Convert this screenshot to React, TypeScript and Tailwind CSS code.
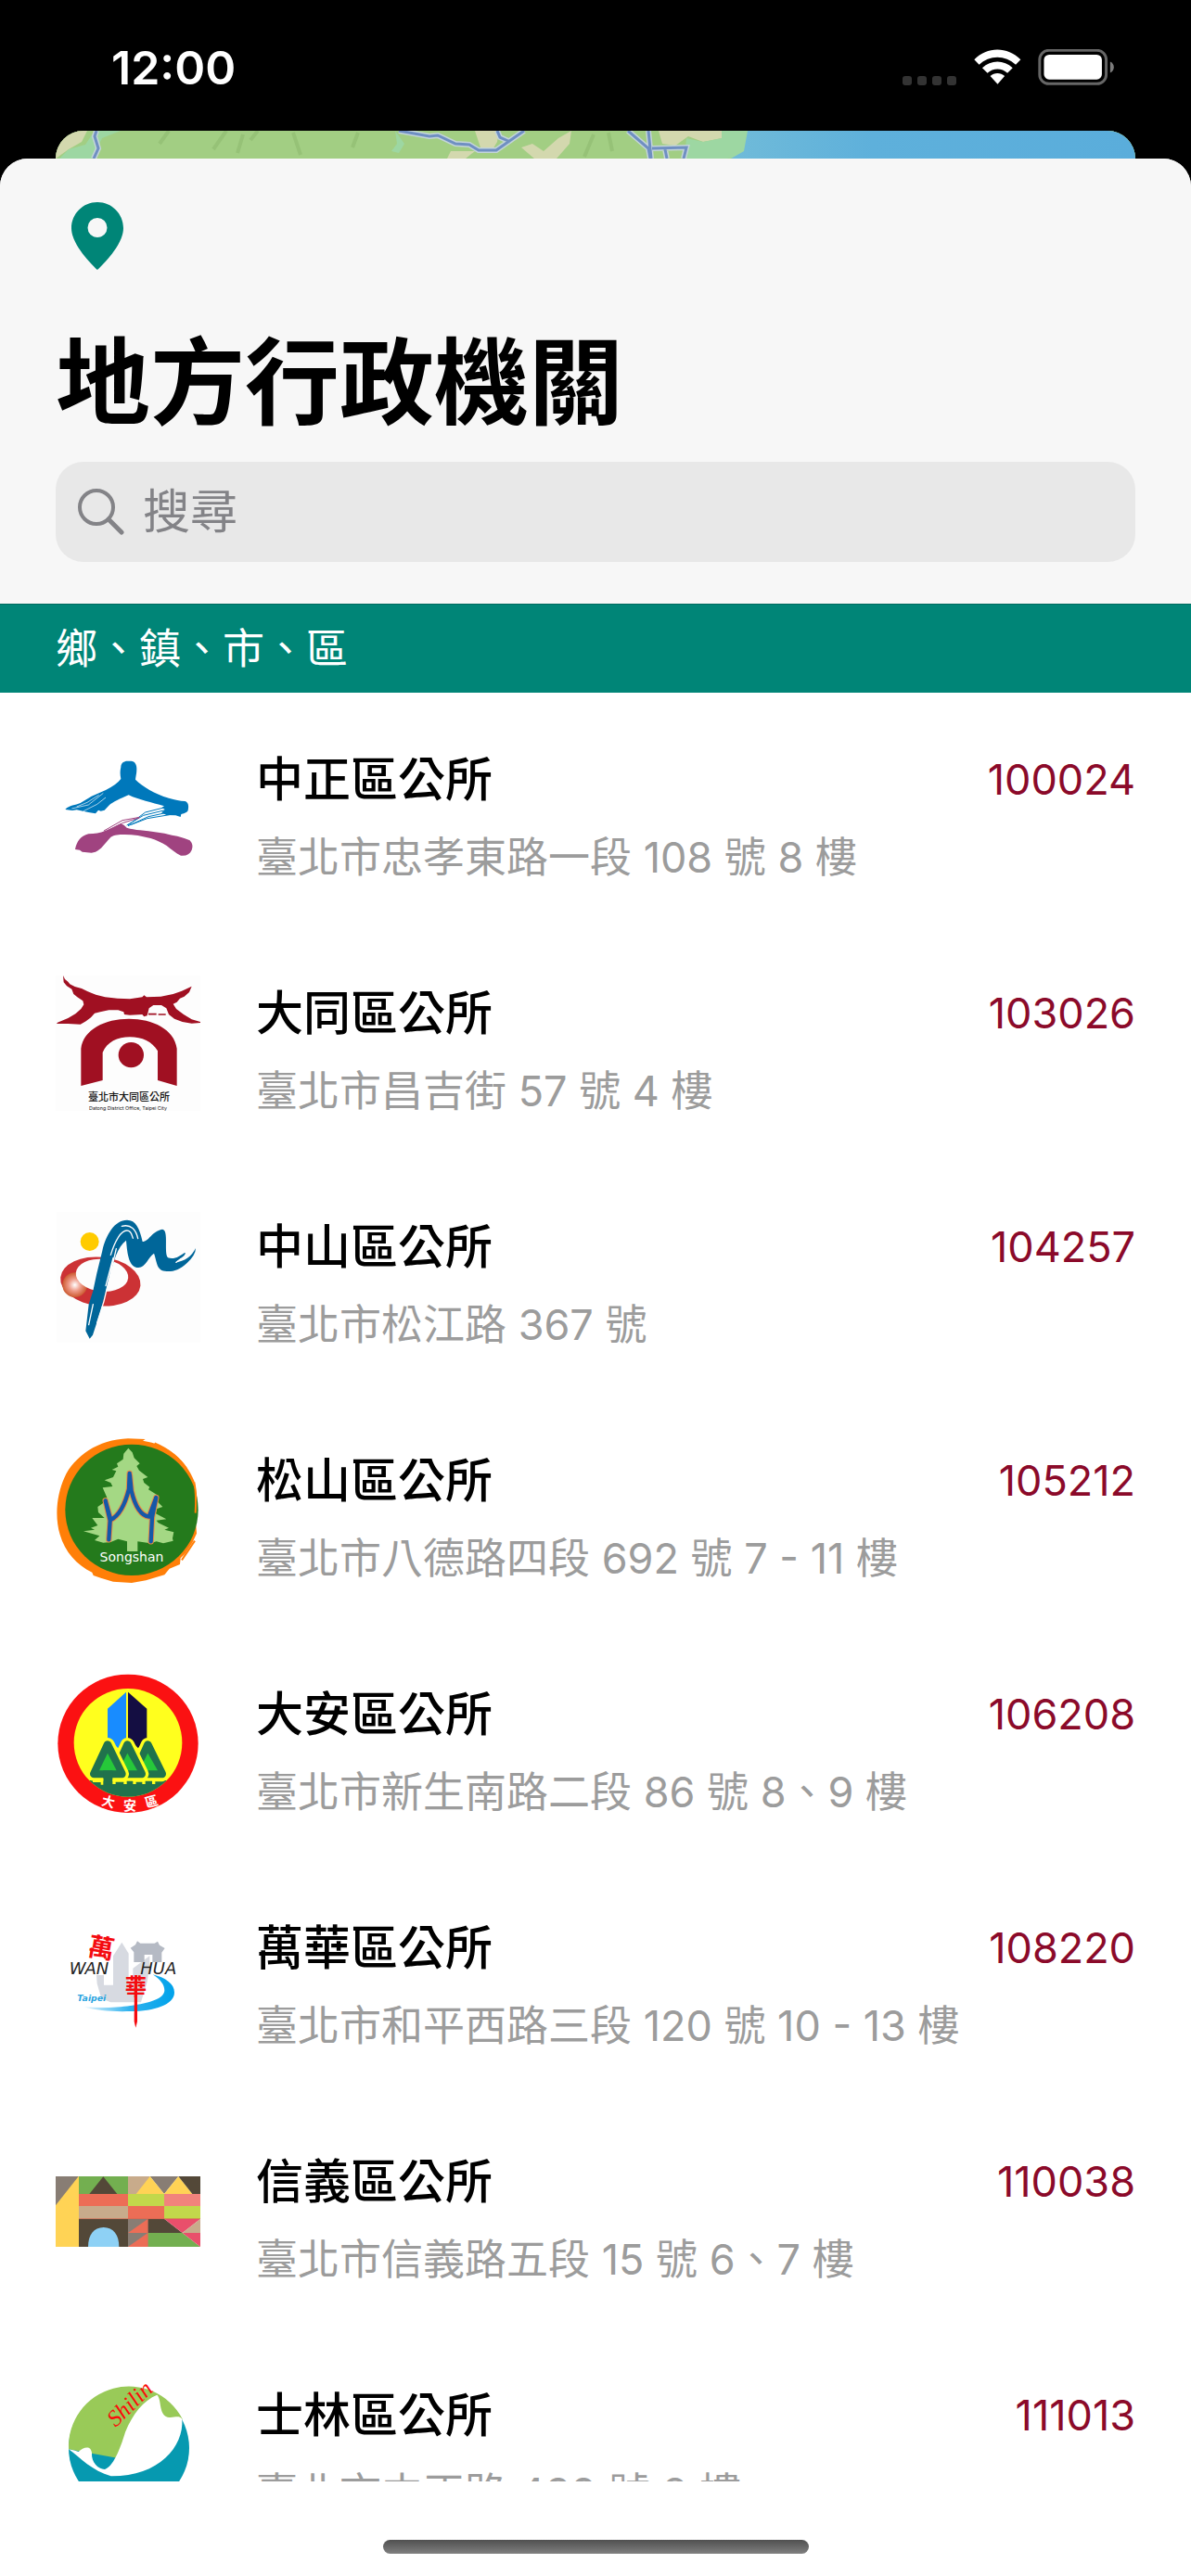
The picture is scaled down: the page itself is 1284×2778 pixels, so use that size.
import type { ReactNode } from "react"

function ZhongzhengLogo() {
  return (
    <svg viewBox="60 45 468 468" className="size-[156px] shrink-0" aria-hidden="true">
      <path
        fill="#0078bb"
        d="M271 142C271 128 281 122 292 122H304C316 123 323 133 322 150C322 162 319 172 318 182C342 206 380 228 426 242C446 248 462 251 478 252C490 256 491 268 488 282C484 290 472 292 466 294L464 303L448 298L418 297L402 289L414 280L404 272L411 268C370 256 330 248 296 232C268 244 246 254 232 266L218 281L206 284L198 281L189 292L166 288L152 285L128 280L114 282L91 279C104 264 124 266 140 258L176 236L222 216C246 204 262 192 271 180C268 166 268 154 271 142Z"
      />
      <path d="M414 272L350 288L294 330M418 280L344 298L290 330M424 288L360 302L294 332M428 296L356 308L304 328" stroke="#0078bb" strokeWidth="3" fill="none" />
      <path d="M112 276L166 264L214 226M150 284L194 262L222 240M128 270L162 256L200 232" stroke="#fff" strokeWidth="2" fill="none" />
      <path
        fill="#a04380"
        d="M123 408C128 382 142 364 166 358C186 356 204 356 220 348C240 340 256 332 270 325C280 327 284 333 290 338C304 342 318 344 333 346C370 350 404 354 436 362C460 366 480 372 494 379C502 388 505 398 500 410C494 424 482 430 465 428C448 420 434 408 419 396C402 386 386 378 367 372C338 364 306 359 276 360C258 360 244 362 235 372C218 390 208 408 189 416L176 419L161 418L146 416L138 410Z"
      />
      <path d="M216 348L276 314L332 304M230 346L278 322L330 306" stroke="#a04380" strokeWidth="3" fill="none" />
    </svg>
  )
}

function DatongLogo() {
  return (
    <svg viewBox="60 51 468 468" className="size-[156px] shrink-0" aria-hidden="true">
      <rect x="60" y="66" width="468" height="438" fill="#fdfdfd" />
      <path
        fill="#a01022"
        d="M84 66L90 78L100 86L106 94L122 102L144 108L164 118L190 128L220 136L260 140L300 142L340 136L346 130L354 136L400 134L440 126L468 116L500 101L492 120L476 134L462 140L452 152L440 158L450 174L474 192L500 208L528 216V219L500 221L470 216L444 206L426 192L418 172L402 162L376 162L362 172L356 196L346 199L340 192L300 194L282 192L280 184L262 178L232 178L204 184L186 188L174 202L158 214L140 224L100 222L63 222L66 218L100 204L124 190L142 174L151 160L148 148L130 136L118 126L112 110L96 100L86 88Z"
      />
      <path d="M360 191H386M392 192H416" stroke="#a01022" strokeWidth="5" />
      <path
        fill="#a01022"
        d="M142 423V302C150 240 220 206 297 206s147 34 155 96v121l-62-18v-95c-18-30-50-45-90-45s-74 16-88 50v90z"
      />
      <circle cx="304" cy="323" r="41" fill="#a01022" />
      <text x="297" y="472" textAnchor="middle" fontSize="33" fontWeight="500" fill="#111" fontFamily="'Noto Sans CJK TC', sans-serif">
        臺北市大同區公所
      </text>
      <text x="294" y="500" textAnchor="middle" fontSize="16" fill="#111" fontFamily="Inter, sans-serif">
        Datong District Office, Taipei City
      </text>
    </svg>
  )
}

function ZhongshanLogo() {
  return (
    <svg viewBox="60 27 468 468" className="size-[156px] shrink-0" aria-hidden="true">
      <defs>
        <radialGradient id="zhongshan-glow">
          <stop offset="0" stopColor="#fff" />
          <stop offset="0.5" stopColor="#ee9a88" />
          <stop offset="1" stopColor="#cc5a30" />
        </radialGradient>
      </defs>
      <rect x="62" y="52" width="466" height="420" fill="#fdfdfd" />
      <ellipse cx="205" cy="276" rx="130" ry="79" transform="rotate(6 205 276)" fill="#cc3235" />
      <circle cx="122" cy="287" r="40" fill="url(#zhongshan-glow)" />
      <ellipse cx="210" cy="256" rx="85" ry="52" transform="rotate(6 210 256)" fill="#fdfdfd" />
      <circle cx="170" cy="147" r="30" fill="#ffcb00" />
      <path
        fill="#006699"
        d="M157 436l10-86 14-44 12-56 18-74c12-52 40-99 80-99 28 0 40 26 50 70 20 0 30-34 64-40 22 2 4 74 18 92 20 8 40-6 54-16q6 0-2 10l-28 22c30-6 52-18 66-47q0 22-28 48c-26 24-44 28-66 27-34-2-30-28-41-58-18 12-28 46-50 46-30 0-36-40-40-88-28 20-42 70-54 120l-28 106-26 80-10 12z"
      />
      <path
        fill="none"
        stroke="#fdfdfd"
        strokeWidth="4"
        strokeLinecap="round"
        d="M274 97c30-8 46 12 52 40M238 190c12-40 34-86 58-78 10 4 10 14 14 24M256 170l-40 170-22 70M246 200l-24 90M181 350l-14 66M450 214l16-12"
      />
    </svg>
  )
}

function SongshanLogo() {
  return (
    <svg viewBox="60 48 468 468" className="size-[156px] shrink-0" aria-hidden="true">
      <path
        fill="#ff7f08"
        d="M294 49l56 2-8 5c80 12 140 64 166 130 10 40 14 80 5 130l3 40-14 30-24 36-14 14-2 20-34 14-16 20-60 18-46 8-60-4-40-12-24-8-4-10c-50-24-88-66-104-122-18-60-10-130 14-184 32-70 110-124 206-127z"
      />
      <ellipse cx="306" cy="280" rx="215" ry="212" fill="#247a1c" />
      <path d="M380 64q70 30 104 84M508 190q8 40 4 100M510 380l-42 62" stroke="#ff7f08" strokeWidth="6" fill="none" />
      <path
        fill="#a4d884"
        d="M295 80L308 94L314 112L332 130L322 138L330 152L358 174L342 180L346 192L364 206L360 214L392 234L382 246L406 270L388 276L384 292L418 310L386 314L392 322L426 338L412 344L442 352L438 372L440 380L408 388L386 382L366 388L325 382V414H291V382L262 374L238 384L214 386L186 378L202 364L150 349L186 344L174 338L196 330L178 306L218 306L198 288L196 270L222 252L226 240L212 208L244 204L238 192L218 184L246 174L256 154L242 150L262 140L258 130L278 116L280 98Z"
      />
      <g fill="none" strokeLinejoin="round" strokeLinecap="round">
        <path
          d="M299 162L297 212C287 252 270 296 238 312L221 250L236 314L232 376M300 168L305 218C315 260 334 298 362 302L385 240L372 304L368 382"
          stroke="#e88b45"
          strokeWidth="19"
        />
        <path
          d="M299 162L297 212C287 252 270 296 238 312L221 250L236 314L232 376M300 168L305 218C315 260 334 298 362 302L385 240L372 304L368 382"
          stroke="#1458a8"
          strokeWidth="13"
        />
      </g>
      <text x="306" y="446" textAnchor="middle" fontSize="42" fill="#fff" fontFamily="'DejaVu Sans', sans-serif">
        Songshan
      </text>
    </svg>
  )
}

function DaanLogo() {
  return (
    <svg viewBox="60 39 468 468" className="size-[156px] shrink-0" aria-hidden="true">
      <defs>
        <clipPath id="daan-disc">
          <circle cx="294" cy="268" r="175" />
        </clipPath>
      </defs>
      <ellipse cx="294" cy="271" rx="227" ry="224" fill="#fb1112" />
      <circle cx="294" cy="268" r="175" fill="#ffff1e" />
      <path d="M228 158l60-54v150l-26 32-34-32z" fill="#188cff" />
      <path d="M294 104l61 54v95l-28 33-33-33z" fill="#140e42" />
      <g clipPath="url(#daan-disc)">
        <rect x="110" y="390" width="370" height="70" fill="#20724c" />
      </g>
      <g strokeLinejoin="round">
        <path d="M358 275l46 94h-88z" fill="#20724c" stroke="#ffff1e" strokeWidth="46" />
        <path d="M358 275l46 94h-88z" fill="#20724c" stroke="#20724c" strokeWidth="26" />
        <path d="M358 302l32 56h-60z" fill="#26c83a" />
        <path d="M292 275l46 94h-88z" fill="#20724c" stroke="#ffff1e" strokeWidth="46" />
        <path d="M292 275l46 94h-88z" fill="#20724c" stroke="#20724c" strokeWidth="26" />
        <path d="M292 302l32 56h-60z" fill="#26c83a" />
        <path d="M228 275l46 94h-90z" fill="#20724c" stroke="#ffff1e" strokeWidth="46" />
        <path d="M228 275l46 94h-90z" fill="#20724c" stroke="#20724c" strokeWidth="26" />
        <path d="M228 302l29 56h-56z" fill="#26c83a" />
      </g>
      <rect x="214" y="358" width="30" height="46" fill="#20724c" />
      <path d="M180 384h34v20h-8v-8h-26zM244 388h46v14h-10v-7h-26v7h-10zM310 388h40v14h-10v-7h-20v7h-10zM372 386h50l-16 8h-24v8h-10z" fill="#ffff1e" />
      <g fill="#fff" fontWeight="700" fontSize="42" textAnchor="middle" fontFamily="'Noto Sans CJK TC', sans-serif">
        <text x="230" y="474" transform="rotate(14 230 460)">大</text>
        <text x="300" y="485">安</text>
        <text x="370" y="474" transform="rotate(-14 370 460)">區</text>
      </g>
    </svg>
  )
}

function WanhuaLogo() {
  return (
    <svg viewBox="60 15 468 468" className="size-[156px] shrink-0" aria-hidden="true">
      <defs>
        <linearGradient id="wanhua-wave">
          <stop offset="0" stopColor="#e6f5fd" />
          <stop offset="0.5" stopColor="#2fb2ee" />
          <stop offset="1" stopColor="#00a2ea" />
        </linearGradient>
      </defs>
      <path d="M192 240h24v32h30V178l28-44 22 36v98h14v-50l54-40v34l-8 50-20 66h-98l-30-12-14-48z" fill="#d7dae1" />
      <path d="M302 152l16-10 6-12 10 7h46l10-6 6 12 17 10-10 14v31h-30v-24h-26v24h-34v-32z" fill="#b5bac4" />
      <path
        fill="url(#wanhua-wave)"
        d="M374 238c40 10 70 30 70 58 0 40-66 60-140 61-60 2-110-2-152-14 50 4 110 2 150-4 60-8 110-22 110-50 0-18-14-36-38-51z"
      />
      <g fill="#222" fontSize="54" fontStyle="italic" fontFamily="'DejaVu Sans', sans-serif">
        <text x="104" y="236">WAN</text>
        <text x="334" y="236">HUA</text>
      </g>
      <text x="130" y="324" fontSize="28" fontStyle="italic" fontWeight="700" fill="#2aa4e0" fontFamily="'DejaVu Sans', sans-serif">
        Taipei
      </text>
      <g fill="#f40b10" fontWeight="700" fontFamily="'Noto Sans CJK TC', sans-serif">
        <text x="166" y="182" fontSize="84" transform="rotate(10 206 150)">萬</text>
        <text x="284" y="304" fontSize="70">華</text>
      </g>
      <path d="M315 240h9v150l-5 20-5-20z" fill="#f40b10" />
    </svg>
  )
}

function XinyiLogo() {
  return (
    <svg viewBox="60 -39 468 468" className="size-[156px] shrink-0" aria-hidden="true">
      <rect x="60" y="81" width="76" height="228" fill="#ffd355" />
      <path d="M60 81h74L60 175z" fill="#887d74" />
      <rect x="135" y="81" width="159" height="57" fill="#73af50" />
      <path d="M214 82l45 56h-90z" fill="#534838" />
      <rect x="135" y="138" width="159" height="39" fill="#ec6d56" />
      <rect x="135" y="177" width="159" height="42" fill="#c8ab8b" />
      <rect x="135" y="219" width="159" height="90" fill="#534838" />
      <path d="M165 309c0-38 18-63 50-63s50 25 50 63z" fill="#8ed1f5" />
      <rect x="294" y="81" width="71" height="57" fill="#c8ab8b" />
      <path d="M365 81h92l-46 57z" fill="#887d74" />
      <path d="M365 81l46 57h-91zM457 81l45 57h-91z" fill="#ffd355" />
      <path d="M457 81h71v57h-26z" fill="#534838" />
      <rect x="294" y="138" width="117" height="39" fill="#c2d84b" />
      <rect x="411" y="138" width="117" height="39" fill="#f1837c" />
      <rect x="294" y="177" width="117" height="42" fill="#ec6d56" />
      <rect x="411" y="177" width="117" height="42" fill="#c2d84b" />
      <rect x="294" y="219" width="64" height="90" fill="#887d74" />
      <path d="M358 219v45h-64zM358 264v45h-64z" fill="#ec6d56" />
      <path d="M358 219h54l58 45H358z" fill="#534838" />
      <path d="M412 219h116l-58 45z" fill="#e94f6b" />
      <path d="M528 219v45h-58z" fill="#c8ab8b" />
      <path d="M358 264h112l58 45H358z" fill="#73af50" />
      <path d="M470 264h58v45z" fill="#e94f6b" />
      <path d="M135 218h393M358 219v90" stroke="#d4674f" strokeWidth="2" />
    </svg>
  )
}

function ShilinLogo() {
  return (
    <svg viewBox="60 57 468 468" className="size-[156px] shrink-0" aria-hidden="true">
      <circle cx="297" cy="300" r="195" fill="#0699b0" />
      <path d="M102 304a195 195 0 0 1 368-98L300 340z" fill="#99ca58" />
      <path
        fill="#fff"
        d="M102 304q20 4 32 8c14-14 40-24 43 4-2 30 20 53 42 53 26-8 48-60 66-120 24-60 60-104 103-121 16 16 4 62 34 72 20 4 36-8 47 6 6 90-76 186-230 185-60-16-100-60-137-87z"
      />
      <text
        x="254"
        y="234"
        fontSize="74"
        fill="#fb0a0a"
        fontStyle="italic"
        transform="rotate(-44 254 234)"
        fontFamily="'Liberation Serif', serif"
      >
        Shilin
      </text>
    </svg>
  )
}

type Office = {
  name: string
  address: string
  code: string
  logo: ReactNode
}

const offices: Office[] = [
  { name: "中正區公所", address: "臺北市忠孝東路一段 108 號 8 樓", code: "100024", logo: <ZhongzhengLogo /> },
  { name: "大同區公所", address: "臺北市昌吉街 57 號 4 樓", code: "103026", logo: <DatongLogo /> },
  { name: "中山區公所", address: "臺北市松江路 367 號", code: "104257", logo: <ZhongshanLogo /> },
  { name: "松山區公所", address: "臺北市八德路四段 692 號 7 - 11 樓", code: "105212", logo: <SongshanLogo /> },
  { name: "大安區公所", address: "臺北市新生南路二段 86 號 8、9 樓", code: "106208", logo: <DaanLogo /> },
  { name: "萬華區公所", address: "臺北市和平西路三段 120 號 10 - 13 樓", code: "108220", logo: <WanhuaLogo /> },
  { name: "信義區公所", address: "臺北市信義路五段 15 號 6、7 樓", code: "110038", logo: <XinyiLogo /> },
  { name: "士林區公所", address: "臺北市中正路 439 號 8 樓", code: "111013", logo: <ShilinLogo /> },
]

function StatusBar() {
  return (
    <div className="flex h-[141px] shrink-0 items-center justify-between pt-1 pl-[120px] pr-[82px] text-white">
      <span className="text-[50px] leading-none font-semibold">12:00</span>
      <div className="flex items-center">
        <div className="mt-7 mr-[19px] flex gap-[6px]">
          <span className="size-[10px] rounded-[3px] bg-[#333333]" />
          <span className="size-[10px] rounded-[3px] bg-[#333333]" />
          <span className="size-[10px] rounded-[3px] bg-[#333333]" />
          <span className="size-[10px] rounded-[3px] bg-[#333333]" />
        </div>
        <svg viewBox="450 100 154 116" className="mr-[18px] h-[39px] w-[51px]" fill="#fff" aria-hidden="true">
          <path d="M451 133c42-43 108-43 151 0l-16 17c-34-33-86-33-119 0z" />
          <path d="M477 160c28-27 71-27 99 0l-17 17c-18-17-47-17-65 0z" />
          <path d="M503 187c13-13 34-13 47 0l-23 26z" />
        </svg>
        <svg viewBox="660 99 248 118" className="h-[39px] w-[83px]" aria-hidden="true">
          <rect x="664" y="103" width="217" height="109" rx="30" fill="none" stroke="#666" strokeWidth="9" />
          <rect x="678" y="117" width="189" height="81" rx="17" fill="#fff" />
          <path d="M894 140c16 6 16 30 0 36z" fill="#7c7c7c" />
        </svg>
      </div>
    </div>
  )
}

function MapStrip() {
  return (
    <div className="mx-[60px] h-[30px] shrink-0 overflow-hidden rounded-t-[30px] bg-[#a2ce83]">
      <svg viewBox="0 0 1164 30" preserveAspectRatio="xMidYMid slice" className="h-full w-full" aria-hidden="true">
        <defs>
          <linearGradient id="sea">
            <stop offset="0" stopColor="#70bbd9" />
            <stop offset="0.35" stopColor="#5eb0db" />
            <stop offset="1" stopColor="#5aaddb" />
          </linearGradient>
        </defs>
        <rect width="1164" height="30" fill="#a2ce83" />
        <path d="M0 0h34l-6 12-14 8-14 10z" fill="#d3d8ae" />
        <path d="M4 30l10-10 18-5 10-15h28l-20 8-10 22z" fill="#9dd7a2" />
        <path d="M112 14l10-14M170 20l14-20M196 24l6-20M210 10l8-10M264 26l-8-24M320 18l6-16M570 28l10-24M600 22l-4-20" stroke="#96c277" strokeWidth="4" />
        <path d="M366 0l10 14-6 10-8-2 6-8z" fill="#9dd7a2" />
        <path d="M452 0h26l-2 12-6 10-12-4zM502 18l12-4 12 8 16-14 14-8-2 14-14 16h-24zM426 22h26l-10 8h-20zM650 0h68v8l-20 4-16-6-14 10-14-2z" fill="#d3d8ae" />
        <path d="M680 8l18 4 20-4V0h28v16l-8 12-14 2h-46z" fill="#9dd7a2" />
        <path d="M746 0h418v30H728l14-8z" fill="url(#sea)" />
        <path
          d="M44 0l-2 6 4 13-5 11M370 0l33 6 9-1 19 9 15 1 10 6h19l30-21M476 0l3 7 11 5M617 0l22 19 2 11M639 0l3 30M643 19l37-1-3 12M657 20l2 10"
          fill="none"
          stroke="#c3d4da"
          strokeWidth="6"
        />
        <path
          d="M44 0l-2 6 4 13-5 11M370 0l33 6 9-1 19 9 15 1 10 6h19l30-21M476 0l3 7 11 5M617 0l22 19 2 11M639 0l3 30M643 19l37-1-3 12M657 20l2 10"
          fill="none"
          stroke="#6f8fc2"
          strokeWidth="3"
        />
      </svg>
    </div>
  )
}

function OfficeRow({ name, address, code, logo }: Office) {
  return (
    <li className="flex h-[252px] items-center px-[60px]">
      {logo}
      <div className="ml-[60px] min-w-0 flex-1 pt-5">
        <div className="flex items-center justify-between">
          <h3 className="text-[51px] leading-[84px] font-medium text-black">{name}</h3>
          <span className="text-[45px] leading-[84px] text-[#8b0a2a]">{code}</span>
        </div>
        <p className="truncate text-[45px] leading-[84px] text-[#9c9c9c]">{address}</p>
      </div>
    </li>
  )
}

export default function App() {
  return (
    <div className="flex h-screen flex-col overflow-hidden bg-black font-['Inter','Noto_Sans_CJK_TC',sans-serif]">
      <StatusBar />
      <MapStrip />

      <main className="flex min-h-0 flex-1 flex-col overflow-hidden rounded-t-[30px] bg-white">
        <header className="shrink-0 bg-[#f7f7f7] px-[60px] pt-[42px] pb-[45px]">
          <button type="button" aria-label="地圖" className="ml-[17px] block">
            <svg viewBox="0 0 56 80" className="h-20 w-14" aria-hidden="true">
              <path
                fill="#008577"
                fillRule="evenodd"
                d="M28 5C12.500 5 0 17.500 0 33c0 20 28 45 28 45s28-25 28-45C56 17.500 43.500 5 28 5zm0 38a10.500 10.500 0 1 1 0-21 10.500 10.500 0 0 1 0 21z"
              />
            </svg>
          </button>
          <h1 className="mt-[54px] text-[102px] leading-[132px] font-bold text-black">地方行政機關</h1>
          <label className="mt-[19px] flex h-[108px] items-center rounded-[30px] bg-[#e8e8e8] pl-6">
            <svg viewBox="0 0 50 50" className="size-[50px] shrink-0" fill="none" stroke="#838387" strokeLinecap="round" aria-hidden="true">
              <circle cx="20" cy="20" r="18" strokeWidth="4" />
              <path d="M33 33l14 14" strokeWidth="5" />
            </svg>
            <input
              type="search"
              aria-label="搜尋"
              placeholder="搜尋"
              className="ml-5 min-w-0 flex-1 bg-transparent text-[51px] text-black outline-none placeholder:text-[#838387]"
            />
          </label>
        </header>

        <section className="flex min-h-0 flex-1 flex-col">
          <h2 className="h-[96px] shrink-0 border-t border-[#00695f] bg-[#008577] px-[60px] text-[45px] leading-[96px] font-normal text-white">
            鄉、鎮、市、區
          </h2>
          <ul className="min-h-0 flex-1 overflow-hidden">
            {offices.map((office) => (
              <OfficeRow key={office.code} {...office} />
            ))}
          </ul>
        </section>

        <footer className="flex h-[102px] shrink-0 items-end justify-center pb-6">
          <span className="h-[15px] w-[459px] rounded-full bg-linear-to-b from-[#505050] to-[#808080]" />
        </footer>
      </main>
    </div>
  )
}
